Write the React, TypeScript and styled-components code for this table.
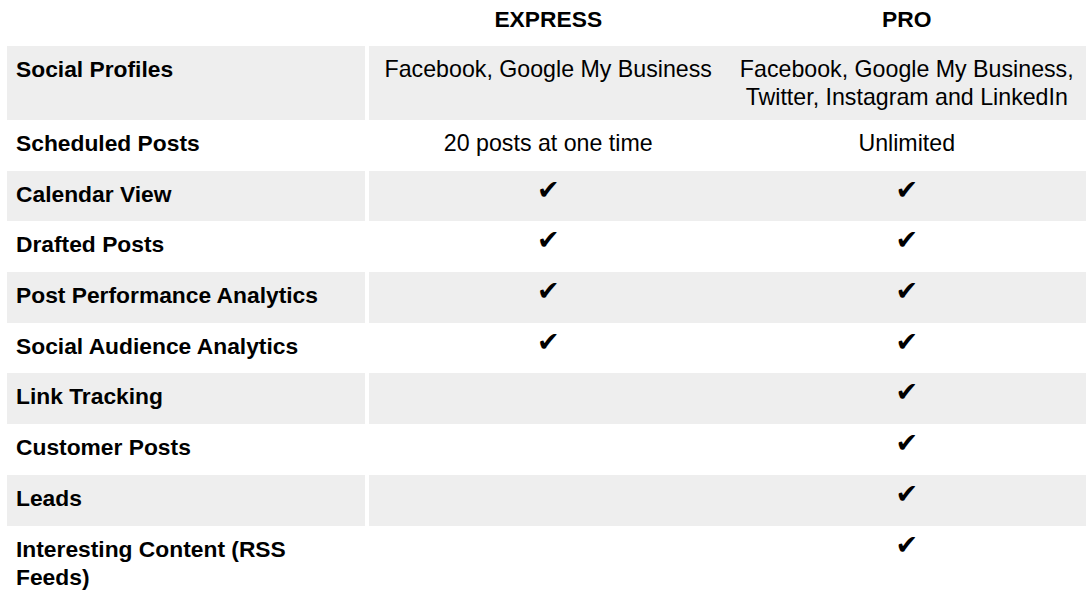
import styled, { createGlobalStyle } from 'styled-components'

const GlobalStyle = createGlobalStyle`
  body {
    margin: 0;
    background: #fff;
    font-family: "Liberation Sans", Arial, Helvetica, sans-serif;
    color: #000;
  }
`

type Value = string | boolean

const features: { name: string; express: Value; pro: Value }[] = [
  { name: 'Social Profiles', express: 'Facebook, Google My Business', pro: 'Facebook, Google My Business, Twitter, Instagram and LinkedIn' },
  { name: 'Scheduled Posts', express: '20 posts at one time', pro: 'Unlimited' },
  { name: 'Calendar View', express: true, pro: true },
  { name: 'Drafted Posts', express: true, pro: true },
  { name: 'Post Performance Analytics', express: true, pro: true },
  { name: 'Social Audience Analytics', express: true, pro: true },
  { name: 'Link Tracking', express: false, pro: true },
  { name: 'Customer Posts', express: false, pro: true },
  { name: 'Leads', express: false, pro: true },
  { name: 'Interesting Content (RSS Feeds)', express: false, pro: true },
]

function renderValue(v: Value) {
  if (v === true) return <Check>✔</Check>
  if (v === false) return null
  return v
}

export default function App() {
  return (
    <>
      <GlobalStyle />
      <Table>
        <HeaderRow>
          <div />
          <Values>
            <HeadCell>EXPRESS</HeadCell>
            <HeadCell>PRO</HeadCell>
          </Values>
        </HeaderRow>
        {features.map((f, i) => (
          <Row key={f.name}>
            <Label $shaded={i % 2 === 0}>{f.name}</Label>
            <Values $shaded={i % 2 === 0}>
              <Cell>{renderValue(f.express)}</Cell>
              <Cell>{renderValue(f.pro)}</Cell>
            </Values>
          </Row>
        ))}
      </Table>
    </>
  )
}

const Table = styled.div`
  width: 1079px;
  padding: 0 7px;
  font-size: 22.8px;
  line-height: 28px;
`

const HeaderRow = styled.div`
  display: grid;
  grid-template-columns: 358px 1fr;
  column-gap: 4px;
  height: 46px;
`

const HeadCell = styled.div`
  padding-top: 5px;
  text-align: center;
  font-weight: bold;
`

const Row = styled.div`
  display: grid;
  grid-template-columns: 358px 1fr;
  column-gap: 4px;
  min-height: 50.7px;
`

const Label = styled.div<{ $shaded: boolean }>`
  padding: 9px 9px;
  font-weight: bold;
  background: ${(p) => (p.$shaded ? '#eeeeee' : '#fff')};
`

const Values = styled.div<{ $shaded?: boolean }>`
  display: grid;
  grid-template-columns: 1fr 1fr;
  background: ${(p) => (p.$shaded ? '#eeeeee' : 'transparent')};
`

const Cell = styled.div`
  padding: 9px 9px;
  text-align: center;
  font-size: 23.2px;
`

const Check = styled.span`
  font-family: "DejaVu Sans", sans-serif;
  font-size: 27px;
  line-height: 0;
  vertical-align: 3px;
`
